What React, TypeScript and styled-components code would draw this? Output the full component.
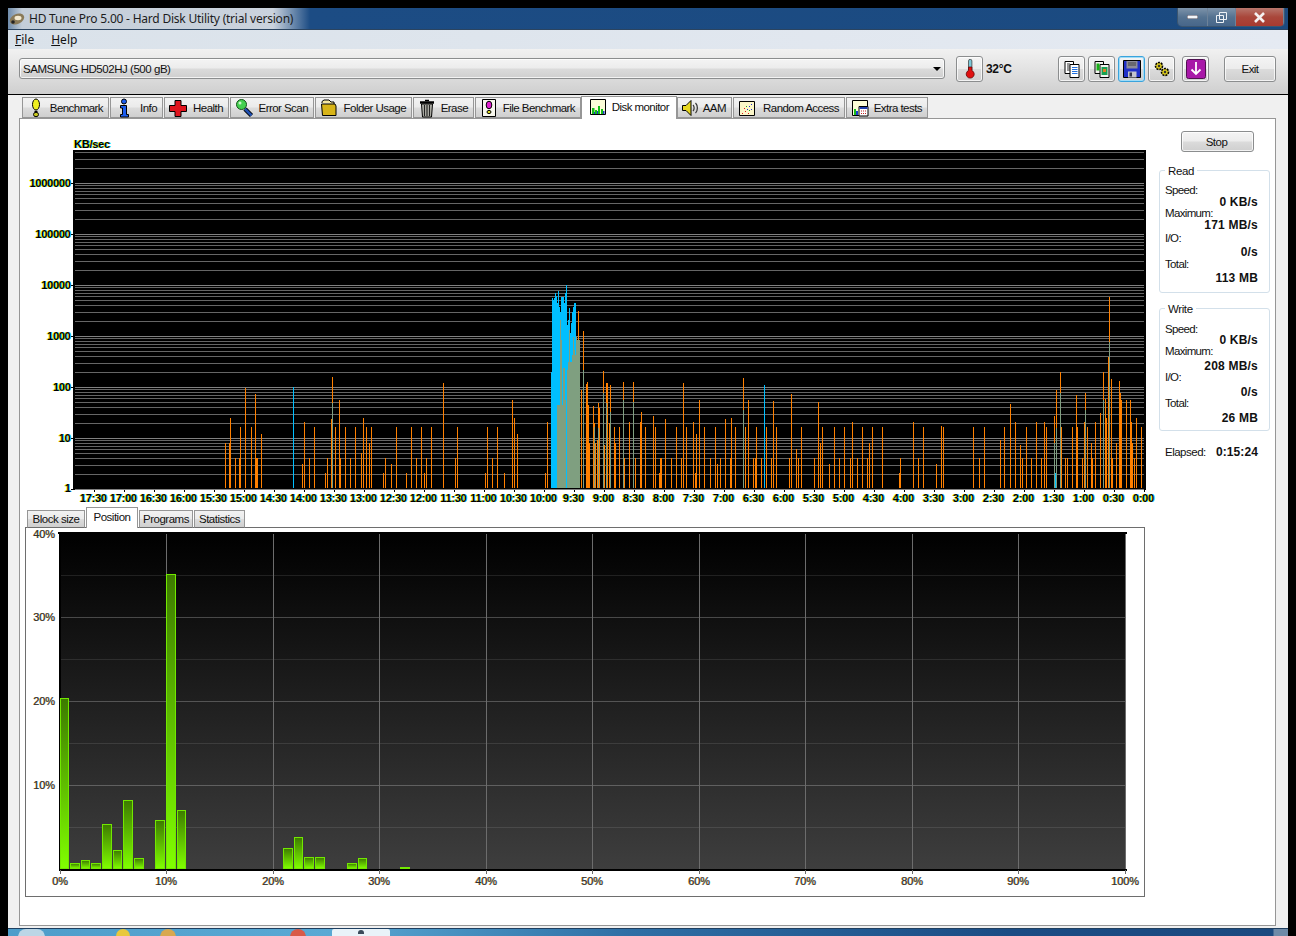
import React from "react";
import styled, { createGlobalStyle } from "styled-components";

const GlobalStyle = createGlobalStyle`
  html, body {
    margin: 0;
    height: 936px;
    overflow: hidden;
    background: #000;
  }
`;

const UI_FONT = `"Liberation Sans", Arial, sans-serif`;

const TABS = [
  { label: "Benchmark", icon: "bulb", w: 87 },
  { label: "Info", icon: "info", w: 53 },
  { label: "Health", icon: "cross", w: 65 },
  { label: "Error Scan", icon: "scan", w: 84 },
  { label: "Folder Usage", icon: "folder", w: 97 },
  { label: "Erase", icon: "trash", w: 61 },
  { label: "File Benchmark", icon: "file", w: 106 },
  { label: "Disk monitor", icon: "monitor", w: 96, active: true },
  { label: "AAM", icon: "speaker", w: 55 },
  { label: "Random Access", icon: "random", w: 112 },
  { label: "Extra tests", icon: "extra", w: 82 },
];

const SUB_TABS = [
  { label: "Block size", w: 58 },
  { label: "Position", w: 52, active: true },
  { label: "Programs", w: 54 },
  { label: "Statistics", w: 51 },
];

// Bars of the upper chart in page pixels: [x, top]
const ORANGE: number[][] = [
  [225,443],[229,443],[230,418],[235,458],[239,458],[240,427],[245,388],[251,427],[255,394],[256,458],[257,458],[261,434],
  [302,464],[304,422],[309,458],[314,427],[325,473],[327,458],[331,419],[332,377],[335,427],[339,400],[340,458],[345,427],
  [350,458],[355,427],[361,453],[363,418],[366,427],[369,443],[371,427],[383,473],[385,458],[391,464],[396,427],[406,473],
  [411,427],[416,458],[421,427],[424,473],[426,458],[431,427],[443,383],[455,458],[457,427],[485,473],[487,427],[492,458],
  [497,427],[504,473],[512,400],[514,418],[517,434],[545,473],[547,422],[578,311],[579,436],[581,390],[583,331],[586,384],
  [587,382],[588,405],[589,443],[593,406],[594,423],[595,443],[597,440],[598,403],[599,408],[603,371],[604,445],[606,383],
  [607,383],[609,423],[610,385],[614,427],[615,443],[619,427],[623,382],[624,458],[629,422],[633,382],[635,458],[640,422],
  [641,412],[645,427],[653,416],[655,427],[659,473],[660,458],[661,458],[665,419],[671,458],[676,427],[681,458],[683,383],
  [686,427],[693,422],[695,473],[696,434],[699,400],[704,427],[710,458],[715,427],[717,464],[720,458],[725,419],[730,458],
  [731,418],[735,427],[743,378],[745,427],[748,400],[753,458],[755,458],[756,427],[761,458],[766,427],[771,458],[773,401],
  [776,427],[789,458],[791,394],[796,449],[798,458],[801,427],[814,458],[818,402],[820,443],[822,427],[829,464],[834,427],
  [839,458],[844,427],[850,458],[852,422],[857,458],[862,427],[867,458],[869,443],[872,427],[882,427],[899,473],[900,458],
  [913,422],[918,458],[923,427],[936,464],[941,426],[943,427],[973,427],[979,458],[984,427],[1000,440],[1004,427],[1010,404],
  [1015,422],[1020,445],[1022,458],[1026,427],[1031,458],[1036,422],[1041,458],[1044,422],[1046,427],[1054,416],[1056,390],
  [1060,372],[1061,427],[1065,458],[1067,458],[1072,427],[1076,395],[1077,427],[1082,458],[1084,422],[1085,393],[1087,427],
  [1091,443],[1092,458],[1095,422],[1100,413],[1103,372],[1105,399],[1106,418],[1108,357],[1109,297],[1111,379],[1112,458],
  [1116,443],[1119,381],[1120,393],[1121,400],[1126,400],[1130,400],[1131,422],[1132,443],[1134,458],[1136,418],[1141,427],
];

const BLUE: number[][] = [
  [293,387],[551,372],[552,298],[553,300],[554,298],[555,293],[556,296],[557,303],[558,291],[559,307],[560,312],[561,297],
  [562,297],[563,297],[564,303],[565,293],[567,325],[568,320],[569,308],[570,333],[571,323],[572,312],[573,307],[574,303],
  [575,303],[764,385],[1054,473],[1055,473],
];

const GREEN: number[][] = [
  [332,403],[557,405],[558,405],[559,405],[560,320],[561,340],[562,405],[563,368],[564,368],[565,400],[567,370],[568,362],
  [569,330],[570,362],[571,362],[572,355],[573,337],[574,350],[575,355],[576,337],[577,340],[578,340],[579,340],[583,370],
  [594,427],[598,428],[603,393],[606,403],[610,412],[623,400],[633,402],[743,410],[1054,443],[1056,428],[1060,393],
  [1085,410],[1103,400],[1109,342],
];

// Bars of the position chart: [x, width, top]
const POSITION: number[][] = [
  [60,9,698],[70,10,863],[81,9,860],[91,10,863],[102,10,824],[113,9,850],[123,10,800],[134,10,858],[145,9,868],
  [155,10,820],[166,10,574],[177,9,810],[283,10,848],[294,9,837],[304,10,857],[315,10,857],[347,10,863],[358,9,858],[400,10,867],
];

const DECADES = [183, 234, 285, 336, 387, 438, 489];
const TIMES = ["17:30","17:00","16:30","16:00","15:30","15:00","14:30","14:00","13:30","13:00","12:30","12:00","11:30","11:00","10:30","10:00","9:30","9:00","8:30","8:00","7:30","7:00","6:30","6:00","5:30","5:00","4:30","4:00","3:30","3:00","2:30","2:00","1:30","1:00","0:30","0:00"];

const Window = styled.div`
  box-sizing: border-box;
  margin: 8px 0 0 8px;
  width: 1280px;
  height: 920px;
  display: flex;
  flex-direction: column;
  font: 11.500px ${UI_FONT};
  color: #111;
  background: #f0f0f0;
`;

const TitleBar = styled.div`
  height: 21px;
  flex: none;
  display: flex;
  align-items: flex-start;
  padding-right: 3px;
  border-bottom: 1px solid #2b4460;
  background: linear-gradient(90deg, #6f8cab 0, #c4ced9 14px, #cbd3dd 265px, #1c4c84 302px, #1b4a80 100%);
`;

const AppIcon = styled.svg`
  width: 16px;
  height: 16px;
  margin: 3px 4px 0 1px;
`;

const TitleText = styled.div`
  font: 12px "Noto Sans", sans-serif;
  line-height: 21px;
  color: #1c1c1c;
  letter-spacing: -0.22px;
`;

const Controls = styled.div`
  margin-left: auto;
  display: flex;
  height: 18px;
  border: 1px solid #3c5670;
  border-top: 0;
  border-radius: 0 0 5px 5px;
  overflow: hidden;
`;

const Control = styled.div<{ $w: number; $close?: boolean }>`
  width: ${(p) => p.$w}px;
  display: flex;
  align-items: center;
  justify-content: center;
  border-right: 1px solid #6d8299;
  background: ${(p) =>
    p.$close
      ? "linear-gradient(#b8766c, #a9473b 50%, #a83a30)"
      : "linear-gradient(#7d93aa, #557391 50%, #47668a)"};
`;

const MenuBar = styled.div`
  height: 19px;
  flex: none;
  display: flex;
  align-items: center;
  gap: 17px;
  padding-left: 7px;
  background: linear-gradient(90deg, #dae2ea, #e5eaf2);
  font: 12px "Noto Sans", sans-serif;
  u {
    text-decoration: underline;
  }
`;

const Toolbar = styled.div`
  height: 46px;
  flex: none;
  box-sizing: border-box;
  display: flex;
  align-items: flex-start;
  padding: 7px 12px 0 11px;
  border-bottom: 1px solid #000;
  background: linear-gradient(#f1f1f1, #e4e4e4 40%, #cfcfcf);
`;

const gloss = `
  border: 1px solid #8b8d8e;
  border-radius: 3px;
  box-shadow: inset 0 0 0 1px rgba(255, 255, 255, 0.75);
  background: linear-gradient(#f4f4f4, #ececec 48%, #dbdbdb 52%, #cfcfcf);
`;

const Combo = styled.div`
  ${gloss}
  box-sizing: border-box;
  width: 926px;
  height: 21px;
  flex: none;
  margin-top: 2px;
  padding: 0 3px 0 3px;
  display: flex;
  align-items: center;
  justify-content: space-between;
  letter-spacing: -0.46px;
`;

const ComboArrow = styled.span`
  width: 0;
  height: 0;
  border-left: 4px solid transparent;
  border-right: 4px solid transparent;
  border-top: 4px solid #000;
`;

const ToolButton = styled.div<{ $focus?: boolean; $gap?: number }>`
  ${gloss}
  ${(p) => (p.$focus ? "border-color: #3aa3dc; box-shadow: inset 0 0 0 1px #9fdcf7;" : "")}
  box-sizing: border-box;
  width: 27px;
  height: 26px;
  flex: none;
  margin-left: ${(p) => p.$gap ?? 3}px;
  display: flex;
  align-items: center;
  justify-content: center;
`;

const Temperature = styled.div`
  width: 34px;
  flex: none;
  margin: 6px 38px 0 3px;
  font-weight: 700;
  font-size: 12px;
  letter-spacing: -0.3px;
  white-space: nowrap;
`;

const ExitButton = styled.div`
  ${gloss}
  box-sizing: border-box;
  width: 52px;
  height: 26px;
  flex: none;
  margin-left: 15px;
  display: flex;
  align-items: center;
  justify-content: center;
  letter-spacing: -0.6px;
`;

const Content = styled.div`
  flex: 1;
  display: flex;
  flex-direction: column;
  padding: 0 12px 2px 11px;
  min-height: 0;
`;

const TabRow = styled.div`
  display: flex;
  align-items: flex-end;
  height: 23px;
  flex: none;
  padding-left: 3px;
  gap: 1px;
`;

const Tab = styled.div<{ $w: number; $active?: boolean }>`
  box-sizing: border-box;
  width: ${(p) => p.$w}px;
  height: ${(p) => (p.$active ? 23 : 21)}px;
  margin: ${(p) => (p.$active ? "0 -1px -1px" : "0")};
  position: relative;
  z-index: ${(p) => (p.$active ? 1 : 0)};
  display: flex;
  align-items: center;
  justify-content: space-between;
  padding: ${(p) => (p.$active ? "0 7px 2px 6px" : "0 5px 0 3px")};
  border: 1px solid #969696;
  border-bottom: ${(p) => (p.$active ? "0" : "1px solid #969696")};
  background: ${(p) => (p.$active ? "#fff" : "linear-gradient(#f2f2f2, #ebebeb 48%, #dcdcdc 52%, #cfcfcf)")};
  letter-spacing: -0.55px;
  white-space: nowrap;
  span {
    padding-top: ${(p) => (p.$active ? 0 : 1)}px;
  }
`;

const TabIcon = styled.svg`
  width: 20px;
  height: 20px;
  flex: none;
`;

const Panel = styled.div`
  flex: 1;
  min-height: 0;
  display: flex;
  border: 1px solid #969696;
  background: #fff;
`;

const LeftColumn = styled.div`
  width: 1139px;
  flex: none;
  padding-top: 13px;
`;

const TopChart = styled.svg`
  display: block;
  width: 1136px;
  height: 375px;
`;

const ChartText = styled.text`
  font: 700 11px ${UI_FONT};
  fill: #000;
  letter-spacing: -0.25px;
  text-shadow: -0.7px 0 #ff0, 0.7px 0 #0cf;
`;

const LowText = styled.text`
  font: 11px ${UI_FONT};
  fill: #333;
  letter-spacing: -0.1px;
  text-shadow: -0.3px 0 #e9a23c, 0.3px 0 #3aa3e0;
`;

const SubTabRow = styled.div`
  display: flex;
  align-items: flex-end;
  height: 20px;
  margin-left: 7px;
  gap: 1px;
`;

const SubTab = styled.div<{ $w: number; $active?: boolean }>`
  box-sizing: border-box;
  width: ${(p) => p.$w}px;
  height: ${(p) => (p.$active ? 21 : 18)}px;
  margin-bottom: -1px;
  position: relative;
  z-index: ${(p) => (p.$active ? 1 : 0)};
  display: flex;
  align-items: center;
  justify-content: center;
  padding-bottom: ${(p) => (p.$active ? 2 : 0)}px;
  border: 1px solid #969696;
  border-bottom: ${(p) => (p.$active ? "0" : "1px solid #6e6e6e")};
  background: ${(p) => (p.$active ? "#fff" : "linear-gradient(#f2f2f2, #ebebeb 48%, #dcdcdc 52%, #cfcfcf)")};
  letter-spacing: -0.5px;
`;

const LowerBox = styled.div`
  box-sizing: border-box;
  width: 1120px;
  height: 370px;
  margin-left: 5px;
  border: 1px solid #6e6e6e;
  background: #fff;
`;

const LowerChart = styled.svg`
  display: block;
  width: 1118px;
  height: 368px;
`;

const Side = styled.div`
  width: 111px;
  flex: none;
  padding-top: 12px;
`;

const StopButton = styled.div`
  ${gloss}
  box-sizing: border-box;
  width: 73px;
  height: 21px;
  margin-left: 22px;
  padding-right: 2px;
  display: flex;
  align-items: center;
  justify-content: center;
  letter-spacing: -0.5px;
`;

const Group = styled.div<{ $top: number; $pad: number }>`
  box-sizing: border-box;
  position: relative;
  height: 123px;
  margin-top: ${(p) => p.$top}px;
  padding: ${(p) => p.$pad}px 11px 0 5px;
  border: 1px solid #d3e0ea;
  border-radius: 3px;
`;

const Legend = styled.span`
  position: absolute;
  left: 5px;
  top: -7px;
  padding: 0 3px;
  line-height: 14px;
  background: #fff;
  letter-spacing: -0.4px;
`;

const StatLabel = styled.div<{ $h: number }>`
  height: ${(p) => p.$h}px;
  line-height: 13px;
  letter-spacing: -0.65px;
`;

const StatValue = styled.div<{ $h: number }>`
  height: ${(p) => p.$h}px;
  line-height: 13px;
  text-align: right;
  font-size: 12px;
  font-weight: 700;
  letter-spacing: 0.2px;
`;

const Elapsed = styled.div`
  display: flex;
  justify-content: space-between;
  margin-top: 14px;
  padding: 0 12px 0 6px;
  line-height: 14px;
  letter-spacing: -0.5px;
  b {
    font-size: 12px;
    letter-spacing: 0.1px;
  }
`;

const Taskbar = styled.div`
  height: 8px;
  margin-left: 8px;
  width: 1280px;
  display: flex;
  align-items: flex-start;
  overflow: hidden;
  box-sizing: border-box;
  border-top: 1px solid #1f3f60;
  background: linear-gradient(90deg, #4e9dca 0, #5aa9d4 320px, #2f6fa5 620px, #1b4c84 1000px, #1b4a80 1265px, #6f8ba8 1266px, #6f8ba8 100%);
`;

const TaskItem = styled.span<{ $x: number; $w: number; $c: string }>`
  width: ${(p) => p.$w}px;
  height: 8px;
  flex: none;
  margin-left: ${(p) => p.$x}px;
  border-radius: ${(p) => p.$w / 2}px ${(p) => p.$w / 2}px 0 0;
  background: ${(p) => p.$c};
`;

const TaskActive = styled.span`
  width: 58px;
  height: 8px;
  flex: none;
  margin-left: 26px;
  display: flex;
  justify-content: center;
  border-radius: 2px 2px 0 0;
  background: #e9f3f9;
  &::after {
    content: "";
    width: 6px;
    height: 4px;
    margin-top: 1px;
    background: #3a4a5a;
    border-radius: 3px 3px 0 0;
  }
`;

const Outlined = { stroke: "#000", strokeWidth: 1 };

function Glyph({ name }: { name: string }) {
  switch (name) {
    case "bulb":
      return (
        <>
          <ellipse cx="10" cy="6.500" rx="3.500" ry="5.500" fill="#eeee20" {...Outlined} />
          <path d="M8.500 13.500h3" stroke="#000" strokeWidth="1.500" />
          <ellipse cx="10" cy="16.500" rx="2.500" ry="2.200" fill="#c8c820" {...Outlined} />
        </>
      );
    case "info":
      return (
        <>
          <circle cx="10" cy="3.500" r="2.500" fill="#1a5cf0" {...Outlined} />
          <path d="M6.500 7.500h6v9h2v2.500h-8v-2.500h2v-6.500h-2z" fill="#1a5cf0" {...Outlined} />
        </>
      );
    case "cross":
      return <path d="M7 2.500h6v5h5.500v6h-5.500v5h-6v-5h-5.500v-6h5.500z" fill="#e0141e" {...Outlined} />;
    case "scan":
      return (
        <>
          <path d="M11 11l6.500 6.500" stroke="#000" strokeWidth="4.500" />
          <path d="M11 11l6.500 6.500" stroke="#1f4fb0" strokeWidth="2.500" />
          <circle cx="7.500" cy="6.500" r="5" fill="#44d050" stroke="#145018" />
          <circle cx="6" cy="5" r="1.500" fill="#c8f5c8" />
        </>
      );
    case "folder":
      return (
        <>
          <path d="M3 5V3.500l2-1.500h5l2 2h3v2" fill="#f4e6a0" {...Outlined} />
          <path d="M2.500 6h13.500l1 2v9.500H3.500z" fill="#d8b418" {...Outlined} />
        </>
      );
    case "trash":
      return (
        <>
          <path d="M3 4.500h14" stroke="#000" strokeWidth="2.500" />
          <path d="M8 2.500h4" stroke="#000" strokeWidth="1.500" />
          <path d="M4.500 6h11l-1 13h-9z" fill="#b8b8b0" {...Outlined} />
          <path d="M7.500 7v11M10 7v11M12.500 7v11" stroke="#222" strokeWidth="1.200" />
        </>
      );
    case "file":
      return (
        <>
          <path d="M3.500 1.500h13v17h-13z" fill="#f8f8ee" {...Outlined} />
          <ellipse cx="10" cy="7" rx="2.800" ry="3.800" fill="#e020d0" {...Outlined} />
          <ellipse cx="10" cy="14" rx="2" ry="1.600" fill="#e0e020" {...Outlined} />
        </>
      );
    case "monitor":
      return (
        <>
          <path d="M2.500 2.500h15v15h-15z" fill="#fdfdd8" {...Outlined} />
          <path d="M4 11h2.500v6H4zM7 13h2v4H7zM10 9h2v8h-2zM13 12h2v5h-2z" fill="#18c018" />
          <path d="M9 14h1v3H9zM6 15h1v2H6zM15 14h1.500v3H15z" fill="#1c3cd0" />
        </>
      );
    case "speaker":
      return (
        <>
          <path d="M1.500 7.500h3.500l5-5v15l-5-5H1.500z" fill="#e8d820" {...Outlined} />
          <path d="M12 7c1.500 1.500 1.500 4.500 0 6M14.500 5c2.500 2.500 2.500 7.500 0 10" fill="none" stroke="#333" strokeWidth="1.200" />
        </>
      );
    case "random":
      return (
        <>
          <path d="M2.500 3.500h15v14h-15z" fill="#fbf6c8" {...Outlined} />
          <path d="M5 15h1v1H5zM8 13h1v1H8zM11 15h1v1h-1zM7 10h1v1H7z" fill="#e01818" />
          <path d="M12 8h1v1h-1zM14 6h1v1h-1zM10 11h1v1h-1zM14 11h1v1h-1z" fill="#2030d0" />
          <path d="M9 8h1v1H9zM12 12h1v1h-1z" fill="#18a018" />
        </>
      );
    case "extra":
      return (
        <>
          <path d="M2.500 2.500h15v15h-15z" fill="#fdfdd8" {...Outlined} />
          <path d="M4 11h2v6H4z" fill="#18c018" />
          <path d="M6 13h2v4H6z" fill="#1c3cd0" />
          <path d="M9 8.500h9v9.500H9z" fill="#fff" {...Outlined} />
          <path d="M9.500 9h8v2h-8z" fill="#2040b0" />
          <path d="M11 12.500h1v1h-1zM13 12.500h1v1h-1zM15 12.500h1v1h-1zM11 15h1v1h-1zM13 15h1v1h-1zM15 15h1v1h-1z" fill="#c02020" />
        </>
      );
    case "thermo":
      return (
        <>
          <path d="M8.500 2a1.700 1.700 0 0 1 3.400 0v9h-3.400z" fill="#7cc8d8" stroke="#333" strokeWidth=".7" />
          <path d="M8.500 8h3.400v3.500a4 4 0 1 1-3.400 0z" fill="#e01010" stroke="#500" strokeWidth=".7" />
        </>
      );
    case "copy":
      return (
        <>
          <path d="M3 2.500h8.500v12H3z" fill="#fff" {...Outlined} />
          <path d="M8 5.500h9v13H8z" fill="#fff" {...Outlined} />
          <path d="M5 5h3M5 7h3M5 9h3M5 11h3" stroke="#333" />
          <path d="M10 8.500h5.500M10 10.500h5.500M10 12.500h5.500M10 14.500h5.500" stroke="#2070e0" />
        </>
      );
    case "copyPic":
      return (
        <>
          <path d="M3 2.500h8.500v12H3z" fill="#f4f4f0" {...Outlined} />
          <path d="M8 5.500h9v13H8z" fill="#f4f4f0" {...Outlined} />
          <path d="M4.500 4.500h3v7h-3z" fill="#18b018" />
          <path d="M9.500 8h6v8h-6z" fill="#18a050" />
          <path d="M11 10h3v3h-3z" fill="#e08020" />
        </>
      );
    case "floppy":
      return (
        <>
          <path d="M1.500 1.500h17v17h-17z" fill="#2030c8" {...Outlined} />
          <path d="M4.500 2h11v7.500h-11z" fill="#8c8c98" />
          <path d="M6 4h8M6 6h8" stroke="#444" />
          <path d="M6 12.500h8.500V18.500H6z" fill="#c4c4cc" />
          <path d="M7.500 13.500h2.500v4H7.500z" fill="#30304a" />
        </>
      );
    case "gears":
      return (
        <>
          <circle cx="7" cy="7" r="3.500" fill="#d8c820" stroke="#000" strokeWidth="1.600" strokeDasharray="2 1" />
          <circle cx="7" cy="7" r="1.200" fill="#333" />
          <circle cx="13" cy="13" r="3.500" fill="#d8c820" stroke="#000" strokeWidth="1.600" strokeDasharray="2 1" />
          <circle cx="13" cy="13" r="1.200" fill="#333" />
        </>
      );
    case "download":
      return (
        <>
          <rect x="0.500" y="0.500" width="19" height="19" rx="2" fill="#a818a8" stroke="#501050" />
          <path d="M10 3v12M5.500 10.500l4.500 4.500 4.500-4.500" fill="none" stroke="#fff" strokeWidth="1.800" />
        </>
      );
    default:
      return null;
  }
}

function Icon({ name }: { name: string }) {
  return (
    <TabIcon viewBox="0 0 20 20">
      <Glyph name={name} />
    </TabIcon>
  );
}

function GridLines() {
  const lines: number[] = [];
  [...DECADES, 132].forEach((d) => {
    for (let k = 1; k < 10; k++) {
      const y = Math.round(d - 51 * Math.log10(k));
      if (y > 150 && y <= 489) lines.push(y);
    }
  });
  return (
    <>
      {lines.map((y, i) => (
        <rect key={i} x="75" y={y} width="1069" height="1" fill="#666" />
      ))}
      {DECADES.map((y) => (
        <rect key={y} x="75" y={y} width="1069" height="1" fill="#808080" />
      ))}
    </>
  );
}

function Bars({ data, color }: { data: number[][]; color: string }) {
  return (
    <>
      {data.map(([x, y]) => (
        <rect key={x} x={x} y={y} width="1" height={488 - y} fill={color} />
      ))}
    </>
  );
}

function SpeedChart() {
  return (
    <TopChart viewBox="20 132 1136 375" shapeRendering="crispEdges">
      <ChartText x="74" y="148">KB/sec</ChartText>
      <rect x="73" y="150" width="1073" height="340" fill="#000" />
      <GridLines />
      <Bars data={ORANGE} color="#ff8000" />
      <Bars data={BLUE} color="#00bfff" />
      <Bars data={GREEN} color="#7f9f80" />
      <rect x="566" y="285" width="1" height="203" fill="#00bfff" />
      {DECADES.map((y, i) => (
        <g key={y}>
          <rect x="71" y={y} width="2" height="1" fill="#000" />
          <ChartText x="70.500" y={i === 6 ? y + 3 : y + 4} textAnchor="end">
            {String(10 ** (6 - i))}
          </ChartText>
        </g>
      ))}
      {TIMES.map((t, i) => (
        <g key={t}>
          <rect x={94 + i * 30} y="490" width="1" height="2" fill="#000" />
          <ChartText x={93.300 + i * 30} y="502" textAnchor="middle">
            {t}
          </ChartText>
        </g>
      ))}
    </TopChart>
  );
}

function PositionChart() {
  const ticks = Array.from({ length: 11 }, (_, i) => Math.floor(60 + i * 106.5));
  return (
    <LowerChart viewBox="26 528 1118 368" shapeRendering="crispEdges">
      <defs>
        <linearGradient id="plot" x1="0" y1="0" x2="0" y2="1">
          <stop offset="0" stopColor="#000" />
          <stop offset="1" stopColor="#3e3e3e" />
        </linearGradient>
        <linearGradient id="bar" x1="0" y1="0" x2="0" y2="1">
          <stop offset="0" stopColor="#3d7a00" />
          <stop offset="1" stopColor="#80ff00" />
        </linearGradient>
      </defs>
      <rect x="60" y="533" width="1066" height="337" fill="url(#plot)" />
      {[575, 659, 743, 827].map((y) => (
        <rect key={y} x="60" y={y} width="1066" height="1" fill="#fff" opacity="0.1" />
      ))}
      {[617, 701, 785].map((y) => (
        <rect key={y} x="60" y={y} width="1066" height="1" fill="#fff" opacity="0.24" />
      ))}
      {ticks.map((x) => (
        <rect key={x} x={x} y="533" width="1" height="341" fill="#6c6c6c" />
      ))}
      <rect x="58" y="532" width="1069" height="2" fill="#000" />
      <rect x="59" y="532" width="2" height="338" fill="#000" />
      <rect x="59" y="869" width="1068" height="2" fill="#000" />
      {ticks.map((x) => (
        <rect key={x} x={x} y="870" width="1" height="4" fill="#6c6c6c" />
      ))}
      {POSITION.map(([x, w, y]) => (
        <rect key={x} x={x + 0.5} y={y + 0.5} width={w - 1} height={868 - y} fill="url(#bar)" stroke="#72e800" strokeWidth="1" />
      ))}
      {[40, 30, 20, 10].map((p, i) => (
        <LowText key={p} x="55" y={[538, 621, 705, 789][i]} textAnchor="end">
          {p}%
        </LowText>
      ))}
      {ticks.map((x, i) => (
        <LowText key={x} x={x} y="885" textAnchor="middle">
          {i * 10}%
        </LowText>
      ))}
    </LowerChart>
  );
}

function Stats({ title, rows, top, pad }: { title: string; rows: [string, number, string, number][]; top: number; pad: number }) {
  return (
    <Group $top={top} $pad={pad}>
      <Legend>{title}</Legend>
      {rows.map(([label, lh, value, vh]) => (
        <React.Fragment key={label}>
          <StatLabel $h={lh}>{label}</StatLabel>
          <StatValue $h={vh}>{value}</StatValue>
        </React.Fragment>
      ))}
    </Group>
  );
}

export default function App() {
  return (
    <>
      <GlobalStyle />
      <Window>
        <TitleBar>
          <AppIcon viewBox="0 0 16 16">
            <ellipse cx="8" cy="8" rx="7.500" ry="5" fill="#8a7a58" transform="rotate(-25 8 8)" />
            <ellipse cx="9" cy="7" rx="3.500" ry="2.200" fill="#f4ead0" />
            <circle cx="4" cy="11" r="1.800" fill="#222" />
          </AppIcon>
          <TitleText>HD Tune Pro 5.00 - Hard Disk Utility (trial version)</TitleText>
          <Controls>
            <Control $w={29}>
              <svg width="11" height="4"><rect width="11" height="4" fill="#f2f5f8" stroke="#445" /></svg>
            </Control>
            <Control $w={27}>
              <svg width="11" height="11"><path d="M3.500.5h7v7h-7zM.5 3.500h7v7h-7z" fill="none" stroke="#eef2f6" /></svg>
            </Control>
            <Control $w={47} $close>
              <svg width="13" height="11"><path d="M2 1l9 9M11 1l-9 9" stroke="#f4f0f0" strokeWidth="2.600" /></svg>
            </Control>
          </Controls>
        </TitleBar>
        <MenuBar>
          <span><u>F</u>ile</span>
          <span><u>H</u>elp</span>
        </MenuBar>
        <Toolbar>
          <Combo>
            SAMSUNG HD502HJ (500 gB)
            <ComboArrow />
          </Combo>
          <ToolButton $gap={11}><Icon name="thermo" /></ToolButton>
          <Temperature>32°C</Temperature>
          <ToolButton $gap={0}><Icon name="copy" /></ToolButton>
          <ToolButton><Icon name="copyPic" /></ToolButton>
          <ToolButton $focus><Icon name="floppy" /></ToolButton>
          <ToolButton><Icon name="gears" /></ToolButton>
          <ToolButton $gap={7}><Icon name="download" /></ToolButton>
          <ExitButton>Exit</ExitButton>
        </Toolbar>
        <Content>
          <TabRow>
            {TABS.map((t) => (
              <Tab key={t.label} $w={t.w} $active={t.active}>
                <Icon name={t.icon} />
                <span>{t.label}</span>
              </Tab>
            ))}
          </TabRow>
          <Panel>
            <LeftColumn>
              <SpeedChart />
              <SubTabRow>
                {SUB_TABS.map((t) => (
                  <SubTab key={t.label} $w={t.w} $active={t.active}>
                    {t.label}
                  </SubTab>
                ))}
              </SubTabRow>
              <LowerBox>
                <PositionChart />
              </LowerBox>
            </LeftColumn>
            <Side>
              <StopButton>Stop</StopButton>
              <Stats
                title="Read"
                top={18}
                pad={13}
                rows={[
                  ["Speed:", 12, "0 KB/s", 11],
                  ["Maximum:", 12, "171 MB/s", 13],
                  ["I/O:", 14, "0/s", 12],
                  ["Total:", 14, "113 MB", 13],
                ]}
              />
              <Stats
                title="Write"
                top={15}
                pad={14}
                rows={[
                  ["Speed:", 11, "0 KB/s", 11],
                  ["Maximum:", 15, "208 MB/s", 11],
                  ["I/O:", 15, "0/s", 11],
                  ["Total:", 15, "26 MB", 13],
                ]}
              />
              <Elapsed>
                <span>Elapsed:</span>
                <b>0:15:24</b>
              </Elapsed>
            </Side>
          </Panel>
        </Content>
      </Window>
      <Taskbar>
        <TaskItem $x={10} $w={27} $c="#bcd6e6" />
        <TaskItem $x={71} $w={14} $c="#e8c83c" />
        <TaskItem $x={30} $w={16} $c="#d8a850" />
        <TaskItem $x={114} $w={16} $c="#d85a48" />
        <TaskActive />
      </Taskbar>
    </>
  );
}
